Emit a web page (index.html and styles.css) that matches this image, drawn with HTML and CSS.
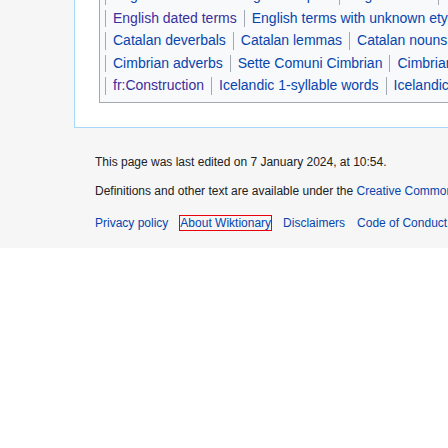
FILE: index.html
```html
<!DOCTYPE html>
<html lang="en">
<head>
<meta charset="utf-8">
<title>Wiktionary</title>
<link rel="stylesheet" href="styles.css">
</head>
<body>
<div class="page">
  <div class="content">
    <div class="catlinks">
      <ul class="catrow">
        <li><a href="#">English terms with usage examples</a></li>
        <li><a href="#">English verbs</a></li>
        <li><a href="#">English terms with quotations</a></li>
      </ul>
      <ul class="catrow">
        <li><a href="#" class="visited">English dated terms</a></li>
        <li><a href="#">English terms with unknown etymologies</a></li>
      </ul>
      <ul class="catrow">
        <li><a href="#">Catalan deverbals</a></li>
        <li><a href="#">Catalan lemmas</a></li>
        <li><a href="#">Catalan nouns</a></li>
      </ul>
      <ul class="catrow">
        <li><a href="#">Cimbrian adverbs</a></li>
        <li><a href="#">Sette Comuni Cimbrian</a></li>
        <li><a href="#">Cimbrian lemmas</a></li>
      </ul>
      <ul class="catrow">
        <li><a href="#" class="visited">fr:Construction</a></li>
        <li><a href="#">Icelandic 1-syllable words</a></li>
        <li><a href="#">Icelandic terms with IPA pronunciation</a></li>
      </ul>
    </div>
  </div>
  <footer class="footer">
    <ul class="footer-info">
      <li>This page was last edited on 7 January 2024, at 10:54.</li>
      <li>Definitions and other text are available under the <a href="#">Creative Commons Attribution-ShareAlike License</a>; additional terms may apply.</li>
    </ul>
    <ul class="footer-places">
      <li><a href="#">Privacy policy</a></li>
      <li><a href="#" class="focused">About Wiktionary</a></li>
      <li><a href="#">Disclaimers</a></li>
      <li><a href="#">Code of Conduct</a></li>
    </ul>
  </footer>
</div>
</body>
</html>
```

FILE: styles.css
```css
html, body {
  margin: 0;
  padding: 0;
  background: #ffffff;
  font-family: "Liberation Sans", Arial, sans-serif;
  overflow: hidden;
}

.page {
  width: 448px;
  background: #f6f6f6;
  overflow: hidden;
}

a {
  color: #0645ad;
  text-decoration: none;
}

a.visited {
  color: #3a2f9c;
}

.content {
  margin: -22px -300px 0 74px;
  background: #ffffff;
  border: 1px solid #a7d7f9;
  border-right: none;
  padding: 0 0 24px 24px;
}

.catlinks {
  border: 1px solid #a2a9b1;
  background: #f8f9fa;
  padding: 5px;
  font-size: 14px;
}

.catrow {
  display: flex;
  align-items: center;
  height: 22.4px;
  margin: 0;
  padding: 0;
  list-style: none;
  white-space: nowrap;
}

.catrow li {
  line-height: 17.5px;
  border-left: 1px solid #a2a9b1;
  padding: 0 7px;
}

.footer {
  margin-left: 74px;
  padding: 20px 0 11px 21px;
  font-size: 12px;
  color: #202122;
  white-space: nowrap;
}

.footer ul {
  margin: 0;
  padding: 0;
  list-style: none;
}

.footer-info li {
  line-height: 16.8px;
  padding: 6px 0;
}

.footer-places {
  display: flex;
  gap: 12px;
  margin-top: 3px !important;
}

.footer-places li {
  line-height: 16.8px;
  padding: 6px 0;
}

.focused {
  outline: 1px solid #e8000d;
  outline-offset: 0;
}
```
